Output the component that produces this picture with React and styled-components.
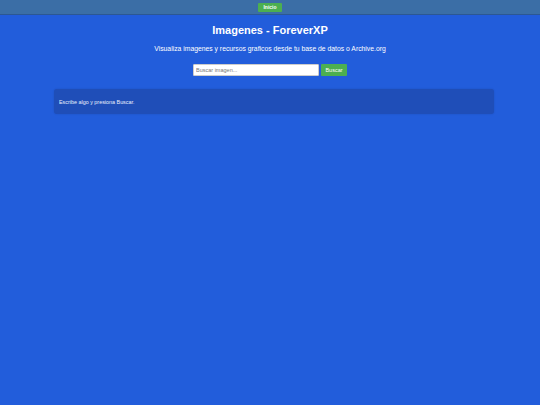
import React from "react";
import styled, { createGlobalStyle } from "styled-components";

const Global = createGlobalStyle`
  html, body { margin: 0; padding: 0; }
  body {
    background: #225ddb;
    font-family: "Liberation Sans", Arial, sans-serif;
    color: #fff;
    min-height: 405px;
  }
`;

const TopBar = styled.div`
  height: 14px;
  background: #3b6ea6;
  border-bottom: 1px solid #2c5793;
  display: flex;
  justify-content: center;
  align-items: center;
`;

const NavButton = styled.button`
  background: #4caf50;
  color: #fff;
  border: none;
  border-radius: 1px;
  font-family: inherit;
  font-weight: bold;
  font-size: 5px;
  height: 9px;
  width: 24px;
  padding: 0;
`;

const Main = styled.div`
  padding: 0 46px;
  display: flex;
  flex-direction: column;
  align-items: center;
`;

const Title = styled.h1`
  margin: 9px 0 0;
  font-size: 11px;
  font-weight: bold;
`;

const Subtitle = styled.p`
  margin: 9px 0 0;
  font-size: 6.8px;
`;

const SearchRow = styled.div`
  margin-top: 12px;
  display: flex;
  gap: 2px;
`;

const Input = styled.input`
  width: 126px;
  height: 12px;
  box-sizing: border-box;
  border: 1px solid #ccc;
  border-radius: 1px;
  font-family: inherit;
  font-size: 5.5px;
  padding: 0 2px;
  &::placeholder { color: #777; }
`;

const SearchButton = styled.button`
  width: 26px;
  height: 12px;
  background: #4caf50;
  color: #fff;
  border: none;
  border-radius: 1px;
  font-family: inherit;
  font-size: 5.5px;
  padding: 0;
`;

const Card = styled.div`
  align-self: stretch;
  margin: 13px 0 0 8px;
  height: 25px;
  box-sizing: border-box;
  background: #1f4eb8;
  border-radius: 3px;
  box-shadow: 0 0 2px rgba(0, 0, 0, 0.15);
  display: flex;
  align-items: center;
  padding: 0 5px;
  font-size: 5.4px;
  color: #e8eefc;
`;

export default function App() {
  return (
    <>
      <Global />
      <TopBar>
        <NavButton>Inicio</NavButton>
      </TopBar>
      <Main>
        <Title>Imagenes - ForeverXP</Title>
        <Subtitle>Visualiza imagenes y recursos graficos desde tu base de datos o Archive.org</Subtitle>
        <SearchRow>
          <Input placeholder="Buscar imagen..." />
          <SearchButton>Buscar</SearchButton>
        </SearchRow>
        <Card>Escribe algo y presiona Buscar.</Card>
      </Main>
    </>
  );
}
